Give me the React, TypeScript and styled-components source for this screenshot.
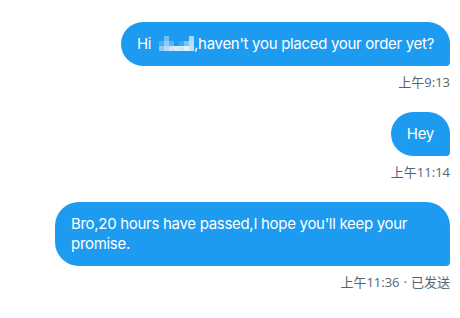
import styled, { createGlobalStyle } from "styled-components";

const GlobalStyle = createGlobalStyle`
  html, body {
    margin: 0;
    padding: 0;
    background: #fff;
  }
  body {
    font-family: "Open Sans", "Noto Sans CJK SC", sans-serif;
  }
`;

const blurCells = [
  ["#1d9bf0", "#6fc0f5", "#1d9bf0", "#1d9bf0", "#1d9bf0", "#1d9bf0", "#a9d8f9"],
  ["#4faff3", "#8dcdf7", "#5cb6f4", "#1d9bf0", "#3ea8f2", "#7cc5f6", "#b8def9"],
  ["#8ccbf6", "#b2dbf8", "#c9e6fa", "#d8edfb", "#cde8fa", "#e4f2fc", "#c2e2f9"],
];

const Pixelated = () => (
  <BlurGrid>
    {blurCells.flat().map((c, i) => (
      <BlurCell key={i} $color={c} />
    ))}
  </BlurGrid>
);

type Msg = {
  content: React.ReactNode;
  time: string;
  status?: string;
};

const messages: Msg[] = [
  {
    content: (
      <>
        Hi <Pixelated />,haven't you placed your order yet?
      </>
    ),
    time: "上午9:13",
  },
  { content: "Hey", time: "上午11:14" },
  {
    content: "Bro,20 hours have passed,I hope you'll keep your promise.",
    time: "上午11:36",
    status: "已发送",
  },
];

const App = () => {
  return (
    <>
      <GlobalStyle />
      <Thread>
        {messages.map((m, i) => (
          <Group key={i}>
            <Bubble>{m.content}</Bubble>
            <Meta>
              {m.time}
              {m.status && (
                <>
                  <Dot>·</Dot>
                  {m.status}
                </>
              )}
            </Meta>
          </Group>
        ))}
      </Thread>
    </>
  );
};

const Thread = styled.div`
  width: 460px;
  height: 318px;
  box-sizing: border-box;
  padding: 22px 10px 0 0;
  display: flex;
  flex-direction: column;
  align-items: flex-end;
  gap: 22px;
`;

const Group = styled.div`
  display: flex;
  flex-direction: column;
  align-items: flex-end;
`;

const Bubble = styled.div`
  max-width: 395px;
  box-sizing: border-box;
  padding: 12px 16px;
  background: #1d9bf0;
  color: #fff;
  font-family: Inter, "Open Sans", sans-serif;
  font-size: 15px;
  font-weight: 400;
  letter-spacing: -0.3px;
  line-height: 20px;
  border-radius: 24px 24px 4px 24px;
`;

const BlurGrid = styled.span`
  display: inline-grid;
  grid-template-columns: repeat(7, 5px);
  grid-template-rows: repeat(3, 5px);
  height: 15px;
  vertical-align: top;
  margin: 2px 0 0 4px;
  line-height: 0;
`;

const BlurCell = styled.span<{ $color: string }>`
  background: ${({ $color }) => $color};
`;

const Meta = styled.div`
  margin-top: 8px;
  font-size: 13px;
  line-height: 16px;
  color: #536471;
  display: flex;
  align-items: center;
`;

const Dot = styled.span`
  margin: 0 4px;
`;

export default App;
